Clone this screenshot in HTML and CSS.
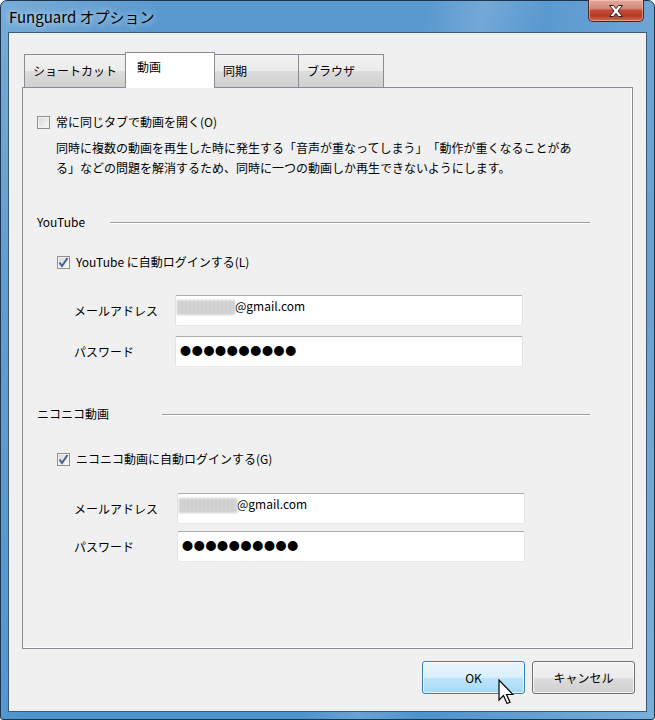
FILE: index.html
```html
<!DOCTYPE html>
<html lang="ja">
<head>
    <meta charset="UTF-8">
    <title>Funguard オプション</title>
    <link rel="stylesheet" href="styles.css">
</head>
<body>
    <div class="window">
        <div class="titlebar">
            <span class="title">Funguard オプション</span>
            <div class="close-btn">
                <svg width="16" height="12" viewBox="0 0 16 12">
                    <path d="M1.5 0.5h4l2.5 3.2 2.5-3.2h4l-4.5 5.5 4.5 5.5h-4l-2.5-3.2-2.5 3.2h-4l4.5-5.5z" fill="#fff" stroke="#3a1f1c" stroke-width="1" stroke-linejoin="round"/>
                </svg>
            </div>
        </div>

        <div class="client">
            <div class="tabs">
                <div class="tab tab-shortcut">ショートカット</div>
                <div class="tab tab-video selected">動画</div>
                <div class="tab tab-sync">同期</div>
                <div class="tab tab-browser">ブラウザ</div>
            </div>

            <div class="panel">
                <label class="check-row first">
                    <span class="checkbox"></span>
                    <span>常に同じタブで動画を開く(O)</span>
                </label>
                <p class="description">同時に複数の動画を再生した時に発生する「音声が重なってしまう」「動作が重くなることがあ<br>る」などの問題を解消するため、同時に一つの動画しか再生できないようにします。</p>

                <div class="group-heading youtube">
                    <span class="group-label">YouTube</span>
                    <span class="group-line"></span>
                </div>
                <label class="check-row sub youtube-check">
                    <span class="checkbox checked">
                        <svg width="11" height="11" viewBox="0 0 11 11"><path d="M1.5 5.5l2.5 3.5 5.5-8" fill="none" stroke="#4b5d93" stroke-width="2"/></svg>
                    </span>
                    <span>YouTube に自動ログインする(L)</span>
                </label>
                <div class="login-form youtube-form">
                    <span class="field-label">メールアドレス</span>
                    <div class="textbox"><span class="masked"></span>@gmail.com</div>
                    <span class="field-label">パスワード</span>
                    <div class="textbox password">●●●●●●●●●●</div>
                </div>

                <div class="group-heading nico">
                    <span class="group-label">ニコニコ動画</span>
                    <span class="group-line"></span>
                </div>
                <label class="check-row sub nico-check">
                    <span class="checkbox checked">
                        <svg width="11" height="11" viewBox="0 0 11 11"><path d="M1.5 5.5l2.5 3.5 5.5-8" fill="none" stroke="#4b5d93" stroke-width="2"/></svg>
                    </span>
                    <span>ニコニコ動画に自動ログインする(G)</span>
                </label>
                <div class="login-form nico-form">
                    <span class="field-label">メールアドレス</span>
                    <div class="textbox"><span class="masked"></span>@gmail.com</div>
                    <span class="field-label">パスワード</span>
                    <div class="textbox password">●●●●●●●●●●</div>
                </div>
            </div>

            <div class="buttons">
                <button type="button" class="btn btn-ok">OK</button>
                <button type="button" class="btn">キャンセル</button>
            </div>
        </div>

        <svg class="cursor" width="16" height="27" viewBox="0 0 16 27">
            <path d="M1 1v20l4.5-4.5 3.5 8 3-1.3-3.5-7.7h6.5z" fill="#fff" stroke="#000" stroke-width="1.2" stroke-linejoin="miter"/>
        </svg>
    </div>
</body>
</html>
```

FILE: styles.css
```css
* {
    box-sizing: border-box;
}

body {
    margin: 0;
    font-family: "Noto Sans CJK JP", sans-serif;
    font-size: 12px;
    color: #000;
    background: #fff;
}

.window {
    position: relative;
    width: 655px;
    height: 720px;
    border: 1px solid #1d3650;
    border-radius: 7px 7px 3px 3px;
    padding: 0 7px 7px;
    display: flex;
    flex-direction: column;
    background:
        linear-gradient(100deg, rgba(255,255,255,0.18) 0%, rgba(255,255,255,0) 20%, rgba(255,255,255,0) 55%, rgba(255,255,255,0.15) 62%, rgba(255,255,255,0) 70%, rgba(255,255,255,0.25) 100%),
        linear-gradient(180deg, #5b9ad0 0%, #4d8fc8 40%, #4f93cd 100%);
}

.titlebar {
    height: 31px;
    display: flex;
    align-items: center;
    padding-left: 1px;
}

.title {
    font-size: 15px;
    color: #000;
    text-shadow: 0 0 6px rgba(255, 255, 255, 0.7), 0 0 10px rgba(255, 255, 255, 0.4);
}

.close-btn {
    position: absolute;
    top: -1px;
    right: 10px;
    width: 56px;
    height: 22px;
    border: 1px solid #4d2420;
    border-top: none;
    border-radius: 0 0 5px 5px;
    background: linear-gradient(180deg, #e4a99f 0%, #d48677 40%, #c24a36 50%, #b83a26 75%, #d26a52 100%);
    box-shadow: inset 0 0 0 1px rgba(255, 210, 200, 0.5);
    display: flex;
    justify-content: center;
    align-items: center;
}

.client {
    flex: 1;
    background: #f0f0f0;
    border: 1px solid #3a5878;
    padding: 18px 13px 0 13px;
    display: flex;
    flex-direction: column;
}

.tabs {
    position: relative;
    z-index: 1;
    display: flex;
    align-items: flex-end;
    height: 36px;
    padding-left: 2px;
}

.tab {
    height: 33px;
    border: 1px solid #898c95;
    border-bottom: none;
    margin-right: -1px;
    padding: 8px 0 0 8px;
    line-height: 16px;
    background: linear-gradient(180deg, #f2f2f2 0%, #ebebeb 50%, #dddddd 50%, #cfcfcf 100%);
}

.tab.selected {
    height: 36px;
    margin-bottom: -1px;
    padding-top: 6px;
    padding-left: 11px;
    background: #fff;
    position: relative;
    z-index: 2;
}

.tab-shortcut { width: 102px; }
.tab-video { width: 90px; }
.tab-sync { width: 85px; }
.tab-browser { width: 86px; }

.panel {
    height: 562px;
    border: 1px solid #898c95;
    box-shadow: inset -1px -1px 0 #fff;
    padding: 0 42px 0 14px;
}

.check-row {
    display: flex;
    align-items: center;
    height: 16px;
    line-height: 16px;
}

.check-row.first {
    margin-top: 26px;
}

.check-row.sub {
    padding-left: 20px;
}

.youtube-check {
    margin-top: 24px;
}

.nico-check {
    margin-top: 29px;
}

.checkbox {
    width: 13px;
    height: 13px;
    margin-right: 6px;
    border: 1px solid #8e8f8f;
    background: linear-gradient(135deg, #d6d6d6 0%, #ececec 60%, #fbfbfb 100%);
    box-shadow: inset 0 0 0 1px #f4f4f4;
    display: flex;
    justify-content: center;
    align-items: center;
}

.description {
    margin: 8px 0 0 0;
    padding-left: 19px;
    width: 560px;
    line-height: 20px;
    text-spacing-trim: space-all;
}

.group-heading {
    display: flex;
    align-items: center;
    height: 16px;
    line-height: 16px;
}

.group-heading.youtube {
    margin-top: 36px;
}

.group-heading.nico {
    margin-top: 39px;
}

.youtube .group-label { width: 73px; }
.nico .group-label { width: 125px; }

.group-line {
    flex: 1;
    height: 2px;
    border-top: 1px solid #a0a0a0;
    border-bottom: 1px solid #fff;
    margin-top: 2px;
}

.login-form {
    display: grid;
    align-items: center;
    padding-left: 37px;
}

.youtube-form {
    grid-template-columns: 101px 348px;
    row-gap: 10px;
    margin-top: 25px;
}

.nico-form {
    grid-template-columns: 103px 348px;
    row-gap: 7px;
    margin-top: 26px;
}

.textbox {
    height: 31px;
    background: #fff;
    border: 1px solid #e2e3ea;
    border-top-color: #abadb3;
    border-bottom-color: #e3e9ef;
    border-radius: 2px;
    padding: 2px 2px 0 1px;
    line-height: 16px;
    display: flex;
    align-items: flex-start;
}

.masked {
    display: inline-block;
    width: 58px;
    height: 15px;
    margin-top: 2px;
    background: repeating-linear-gradient(90deg, #c4c4c4 0 2px, #dedede 2px 4px);
    filter: blur(0.8px);
}

.password {
    padding: 5px 0 0 4px;
    font-size: 11px;
    letter-spacing: 0.7px;
}

.buttons {
    display: flex;
    justify-content: flex-end;
    gap: 7px;
    margin-top: 12px;
    margin-right: -2px;
}

.btn {
    width: 103px;
    height: 33px;
    border: 1px solid #707070;
    border-radius: 3px;
    font-family: "Noto Sans CJK JP", sans-serif;
    font-size: 12px;
    color: #000;
    background: linear-gradient(180deg, #f2f2f2 0%, #ebebeb 50%, #dddddd 50%, #cfcfcf 100%);
    box-shadow: inset 0 0 0 1px rgba(255, 255, 255, 0.7);
}

.btn-ok {
    border-color: #3c7fb1;
    background: linear-gradient(180deg, #eaf6fd 0%, #d9f0fc 50%, #bee6fd 50%, #a7d9f5 100%);
}

.cursor {
    position: absolute;
    left: 497px;
    top: 678px;
}
```
